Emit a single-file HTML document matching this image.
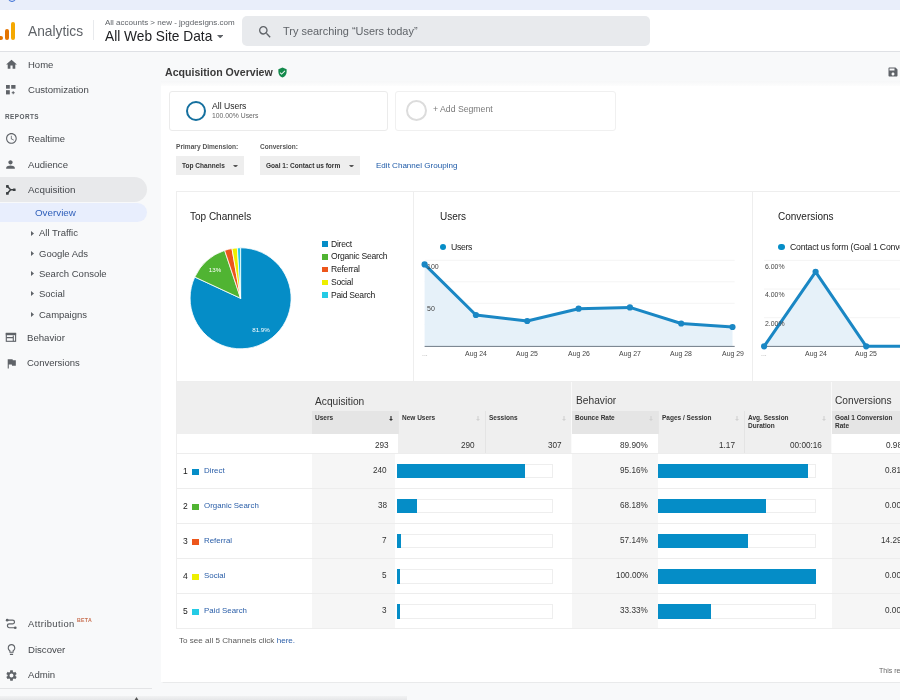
<!DOCTYPE html>
<html><head><meta charset="utf-8"><style>
html,body{margin:0;padding:0;}
body{width:900px;height:700px;overflow:hidden;position:relative;background:#f8f9fa;font-family:"Liberation Sans", sans-serif;}
.t{position:absolute;line-height:1;white-space:nowrap;will-change:transform;}
.r{position:absolute;}
</style></head><body>
<div class="r" style="left:0px;top:0px;width:900px;height:10px;background:#e9eefa;"></div>
<div class="r" style="left:0px;top:10px;width:900px;height:41px;background:#ffffff;"></div>
<div class="r" style="left:0px;top:51px;width:900px;height:1px;background:#dfe1e5;"></div>
<div class="r" style="left:0px;top:52px;width:900px;height:648px;background:#f8f9fa;"></div>
<div class="r" style="left:7.8px;top:-6.5px;width:8.4px;height:8.4px;border-radius:50%;border:1.6px solid #3b6fd4;box-sizing:border-box;background:#dfe7fb;"></div>
<div class="r" style="left:10.9px;top:22px;width:4.199999999999999px;height:18px;background:#f5a800;border-radius:2px;"></div>
<div class="r" style="left:4.9px;top:29.2px;width:4.199999999999999px;height:10.8px;background:#e37400;border-radius:2px;"></div>
<div class="r" style="left:-1.7px;top:35.8px;width:4.2px;height:4.200000000000003px;background:#e37400;border-radius:50%;"></div>
<div class="t" style="left:28.00px;top:25.00px;font-size:13.75px;color:#5f6368;font-weight:400;">Analytics</div>
<div class="r" style="left:93px;top:20px;width:1px;height:20px;background:#e8eaed;"></div>
<div class="t" style="left:104.70px;top:19.00px;font-size:8.0px;color:#5f6368;font-weight:400;">All accounts &gt; new - jpgdesigns.com</div>
<div class="t" style="left:104.70px;top:30.00px;font-size:13.72px;color:#202124;font-weight:400;">All Web Site Data</div>
<svg class="r" style="left:216.8px;top:34.8px;" width="6.4" height="3.4" viewBox="0 0 6.4 3.4"><path d="M0 0h6.4L3.2 3.4z" fill="#5f6368"/></svg>
<div class="r" style="left:242px;top:16px;width:408px;height:30px;background:#e8eaed;border-radius:5px;"></div>
<svg class="r" style="left:256.5px;top:23.5px;" width="16" height="16" viewBox="0 0 24 24"><path fill="#5f6368" d="M15.5 14h-.79l-.28-.27A6.471 6.471 0 0 0 16 9.5 6.5 6.5 0 1 0 9.5 16c1.61 0 3.09-.59 4.23-1.57l.27.28v.79l5 4.99L20.49 19l-4.99-5zm-6 0C7.01 14 5 11.99 5 9.5S7.01 5 9.5 5 14 7.01 14 9.5 11.99 14 9.5 14z"/></svg>
<div class="t" style="left:283.40px;top:26.00px;font-size:10.94px;color:#5f6368;font-weight:400;">Try searching “Users today”</div>
<div class="r" style="left:0px;top:176.8px;width:146.6px;height:25.69999999999999px;background:#e8e9eb;border-radius:0 13px 13px 0;"></div>
<div class="r" style="left:0px;top:202.5px;width:146.6px;height:19.5px;background:#e8eefd;border-radius:0 10px 10px 0;"></div>
<svg class="r" style="left:4.5px;top:57.5px;" width="13" height="13" viewBox="0 0 24 24"><path fill="#5f6368" d="M10 20v-6h4v6h5v-8h3L12 3 2 12h3v8z"/></svg>
<div class="t" style="left:27.80px;top:60.00px;font-size:9.5px;color:#45484c;font-weight:400;">Home</div>
<svg class="r" style="left:0px;top:80px;" width="25" height="20" viewBox="0 0 25 20"><g fill="#5f6368"><rect x="6" y="5" width="3.8" height="3.7"/><rect x="11.2" y="5" width="4.3" height="3.7"/><rect x="6" y="10.2" width="3.8" height="4.2"/><rect x="12.7" y="11.2" width="1" height="3"/><rect x="11.7" y="12.2" width="3" height="1"/></g></svg>
<div class="t" style="left:27.80px;top:85.00px;font-size:9.6px;color:#45484c;font-weight:400;">Customization</div>
<div class="t" style="left:4.70px;top:114.00px;font-size:6.4px;color:#5a5e62;font-weight:700;letter-spacing:0.45px;">REPORTS</div>
<svg class="r" style="left:4.8px;top:132.2px;" width="12.8" height="12.8" viewBox="0 0 24 24"><path fill="#5f6368" d="M11.99 2C6.47 2 2 6.48 2 12s4.47 10 9.99 10C17.52 22 22 17.52 22 12S17.52 2 11.99 2zM12 20c-4.42 0-8-3.58-8-8s3.58-8 8-8 8 3.58 8 8-3.58 8-8 8zm.5-13H11v6l5.25 3.15.75-1.23-4.5-2.67z"/></svg>
<div class="t" style="left:27.60px;top:134.00px;font-size:9.4px;color:#45484c;font-weight:400;">Realtime</div>
<svg class="r" style="left:4.2px;top:158px;" width="13" height="13" viewBox="0 0 24 24"><path fill="#5f6368" d="M12 12c2.21 0 4-1.79 4-4s-1.79-4-4-4-4 1.79-4 4 1.79 4 4 4zm0 2c-2.67 0-8 1.34-8 4v2h16v-2c0-2.66-5.33-4-8-4z"/></svg>
<div class="t" style="left:27.60px;top:160.00px;font-size:9.6px;color:#45484c;font-weight:400;">Audience</div>
<svg class="r" style="left:0px;top:178px;" width="25" height="20" viewBox="0 0 25 20"><g stroke="#3c4043" stroke-width="1.5" fill="none"><path d="M7.3 8.3L10.6 11.7L7.3 15.4M10.6 11.7H14.2"/></g><g fill="#3c4043"><rect x="6" y="7" width="2.7" height="2.7" rx="0.5"/><rect x="6" y="14.1" width="2.7" height="2.7" rx="0.5"/><rect x="12.9" y="10.4" width="2.7" height="2.7" rx="0.5"/></g></svg>
<div class="t" style="left:27.60px;top:185.00px;font-size:9.8px;color:#45484c;font-weight:400;">Acquisition</div>
<div class="t" style="left:35.20px;top:208.00px;font-size:9.8px;color:#2f5fba;font-weight:400;">Overview</div>
<svg class="r" style="left:31px;top:230.5px;" width="3" height="5" viewBox="0 0 3 5"><path d="M0 0L3 2.5L0 5z" fill="#5f6368"/></svg>
<div class="t" style="left:38.90px;top:228.00px;font-size:9.5px;color:#45484c;font-weight:400;">All Traffic</div>
<svg class="r" style="left:31px;top:250.8px;" width="3" height="5" viewBox="0 0 3 5"><path d="M0 0L3 2.5L0 5z" fill="#5f6368"/></svg>
<div class="t" style="left:38.90px;top:249.00px;font-size:9.5px;color:#45484c;font-weight:400;">Google Ads</div>
<svg class="r" style="left:31px;top:271.1px;" width="3" height="5" viewBox="0 0 3 5"><path d="M0 0L3 2.5L0 5z" fill="#5f6368"/></svg>
<div class="t" style="left:38.90px;top:269.00px;font-size:9.5px;color:#45484c;font-weight:400;">Search Console</div>
<svg class="r" style="left:31px;top:291.4px;" width="3" height="5" viewBox="0 0 3 5"><path d="M0 0L3 2.5L0 5z" fill="#5f6368"/></svg>
<div class="t" style="left:38.90px;top:289.00px;font-size:9.5px;color:#45484c;font-weight:400;">Social</div>
<svg class="r" style="left:31px;top:311.7px;" width="3" height="5" viewBox="0 0 3 5"><path d="M0 0L3 2.5L0 5z" fill="#5f6368"/></svg>
<div class="t" style="left:38.90px;top:310.00px;font-size:9.5px;color:#45484c;font-weight:400;">Campaigns</div>
<svg class="r" style="left:0px;top:325px;" width="25" height="25" viewBox="0 0 25 25"><g fill="none" stroke="#5f6368" stroke-width="1.1"><rect x="6.3" y="8.4" width="9.3" height="7.9"/><path d="M6.3 12.6H13.3M13.3 10.5V16.3"/></g><rect x="5.8" y="7.9" width="10.3" height="2.3" fill="#5f6368"/></svg>
<div class="t" style="left:27.40px;top:333.00px;font-size:9.6px;color:#45484c;font-weight:400;">Behavior</div>
<svg class="r" style="left:4.5px;top:357px;" width="13" height="13" viewBox="0 0 24 24"><path fill="#5f6368" d="M14.4 6L14 4H5v17h2v-7h5.6l.4 2h7V6z"/></svg>
<div class="t" style="left:27.40px;top:358.00px;font-size:9.5px;color:#45484c;font-weight:400;">Conversions</div>
<svg class="r" style="left:4.5px;top:617.5px;" width="13" height="13" viewBox="0 0 24 24"><g fill="none" stroke="#5f6368" stroke-width="2.2"><path d="M4 4h10a3.5 3.5 0 0 1 0 7H8a3.5 3.5 0 0 0 0 7h11"/></g><circle cx="4" cy="4" r="2.5" fill="#5f6368"/><circle cx="19" cy="18" r="2.5" fill="#5f6368"/></svg>
<div class="t" style="left:27.80px;top:619.00px;font-size:9.4px;color:#45484c;font-weight:400;letter-spacing:0.4px;">Attribution</div>
<div class="t" style="left:76.90px;top:618.00px;font-size:5.2px;color:#c86f4f;font-weight:700;letter-spacing:0.3px;">BETA</div>
<svg class="r" style="left:4.5px;top:643px;" width="13" height="13" viewBox="0 0 24 24"><path fill="#5f6368" d="M9 21c0 .55.45 1 1 1h4c.55 0 1-.45 1-1v-1H9v1zm3-19C8.14 2 5 5.14 5 9c0 2.38 1.19 4.470 3 5.74V17c0 .55.45 1 1 1h6c.55 0 1-.45 1-1v-2.26c1.81-1.27 3-3.36 3-5.740 0-3.86-3.14-7-7-7zm2.85 11.1l-.85.6V16h-4v-2.3l-.85-.6C7.8 12.16 7 10.63 7 9c0-2.76 2.24-5 5-5s5 2.24 5 5c0 1.63-.8 3.16-2.15 4.1z"/></svg>
<div class="t" style="left:27.80px;top:645.00px;font-size:9.6px;color:#45484c;font-weight:400;">Discover</div>
<svg class="r" style="left:4.5px;top:668.5px;" width="13" height="13" viewBox="0 0 24 24"><path fill="#5f6368" d="M19.14 12.94c.04-.3.06-.61.06-.94 0-.32-.02-.64-.07-.94l2.03-1.58c.18-.14.23-.41.12-.61l-1.92-3.32c-.12-.22-.37-.29-.59-.22l-2.39.96c-.5-.38-1.030-.7-1.62-.94l-.36-2.54c-.04-.24-.24-.41-.48-.41h-3.84c-.24 0-.43.17-.47.41l-.36 2.54c-.59.24-1.13.57-1.62.94l-2.39-.96c-.22-.08-.47 0-.59.22L2.74 8.87c-.12.21-.08.47.12.61l2.03 1.58c-.05.3-.09.63-.09.94s.02.64.07.94l-2.03 1.58c-.18.14-.23.41-.12.61l1.92 3.32c.12.22.37.29.59.22l2.39-.96c.5.38 1.03.7 1.62.94l.36 2.54c.05.24.24.41.48.41h3.84c.24 0 .44-.17.47-.41l.36-2.54c.59-.24 1.13-.56 1.62-.94l2.39.96c.22.08.47 0 .59-.22l1.92-3.32c.12-.22.07-.47-.12-.61l-2.01-1.58zM12 15.6c-1.98 0-3.6-1.62-3.6-3.6s1.62-3.6 3.6-3.6 3.6 1.62 3.6 3.6-1.62 3.6-3.6 3.6z"/></svg>
<div class="t" style="left:27.80px;top:670.00px;font-size:9.6px;color:#45484c;font-weight:400;">Admin</div>
<div class="r" style="left:0px;top:688px;width:152px;height:1px;background:#e3e4e6;"></div>
<div class="r" style="left:0px;top:695.5px;width:407px;height:4.5px;background:linear-gradient(#f1f2f3,#e6e7e9);"></div>
<svg class="r" style="left:133.8px;top:696.5px;" width="5" height="4" viewBox="0 0 5 4"><path d="M0 4L2.5 0L5 4z" fill="#555"/></svg>
<div class="t" style="left:165.40px;top:67.00px;font-size:10.6px;color:#3a3a3a;font-weight:700;">Acquisition Overview</div>
<svg class="r" style="left:277.3px;top:66.5px;" width="11" height="11" viewBox="0 0 24 24"><path fill="#148a4c" d="M12 1L3 5v6c0 5.55 3.84 10.74 9 12 5.160-1.26 9-6.45 9-12V5l-9-4zm-2 16l-4-4 1.41-1.41L10 14.17l6.59-6.59L18 9l-8 8z"/></svg>
<svg class="r" style="left:886.5px;top:66px;" width="12" height="12" viewBox="0 0 24 24"><path fill="#5f6368" d="M17 3H5c-1.11 0-2 .9-2 2v14c0 1.1.89 2 2 2h14c1.1 0 2-.9 2-2V7l-4-4zm-5 16c-1.66 0-3-1.34-3-3s1.34-3 3-3 3 1.34 3 3-1.34 3-3 3zm3-10H5V5h10v4z"/></svg>
<div class="r" style="left:160.5px;top:81px;width:749.5px;height:5px;background:linear-gradient(#f6f7f8,#fdfdfd);"></div>
<div class="r" style="left:160.5px;top:85.5px;width:749.5px;height:596.1px;background:#ffffff;box-shadow:-0.5px 0.5px 1px rgba(0,0,0,0.06);"></div>
<div class="r" style="left:169px;top:90.5px;width:219px;height:40.5px;background:#fff;border:1px solid #ebebeb;border-radius:3px;box-sizing:border-box;"></div>
<div class="r" style="left:185.9px;top:100.5px;width:20.6px;height:20.6px;border:2.5px solid #15709f;border-radius:50%;box-sizing:border-box;"></div>
<div class="t" style="left:212.20px;top:102.00px;font-size:8.6px;color:#222;font-weight:400;">All Users</div>
<div class="t" style="left:212.20px;top:113.00px;font-size:6.8px;color:#666;font-weight:400;">100.00% Users</div>
<div class="r" style="left:395.4px;top:91px;width:220.30000000000007px;height:39.599999999999994px;background:#fff;border:1px solid #f0f0f0;border-radius:3px;box-sizing:border-box;"></div>
<div class="r" style="left:406px;top:100px;width:21px;height:21px;border:2px solid #dcdcdc;border-radius:50%;box-sizing:border-box;"></div>
<div class="t" style="left:433.00px;top:105.00px;font-size:8.7px;color:#7a7a7a;font-weight:400;">+ Add Segment</div>
<div class="t" style="left:176.00px;top:144.00px;font-size:6.6px;color:#555;font-weight:700;">Primary Dimension:</div>
<div class="t" style="left:259.70px;top:144.00px;font-size:6.5px;color:#555;font-weight:700;">Conversion:</div>
<div class="r" style="left:176px;top:156.4px;width:67.5px;height:18.19999999999999px;background:#eeeeee;"></div>
<div class="t" style="left:181.50px;top:163.00px;font-size:6.55px;color:#333;font-weight:700;">Top Channels</div>
<svg class="r" style="left:233.3px;top:164.6px;" width="5" height="2.8" viewBox="0 0 5 2.8"><path d="M0 0h5L2.5 2.8z" fill="#555"/></svg>
<div class="r" style="left:259.7px;top:156.4px;width:99.90000000000003px;height:18.19999999999999px;background:#eeeeee;"></div>
<div class="t" style="left:265.60px;top:163.00px;font-size:6.56px;color:#333;font-weight:700;">Goal 1: Contact us form</div>
<svg class="r" style="left:348.8px;top:164.6px;" width="5" height="2.8" viewBox="0 0 5 2.8"><path d="M0 0h5L2.5 2.8z" fill="#555"/></svg>
<div class="t" style="left:375.80px;top:162.00px;font-size:8.05px;color:#1f5ba8;font-weight:400;">Edit Channel Grouping</div>
<div class="r" style="left:176px;top:191px;width:734px;height:191px;background:#fff;border:1px solid #eeeeee;box-sizing:border-box;"></div>
<div class="r" style="left:413px;top:191px;width:1px;height:191px;background:#eeeeee;"></div>
<div class="r" style="left:752px;top:191px;width:1px;height:191px;background:#eeeeee;"></div>
<svg class="r" style="left:0;top:0" width="900" height="700" viewBox="0 0 900 700"><path d="M240.6,298.3 L240.60,247.80 A50.5,50.5 0 1 1 194.79,277.05 Z" fill="#058dc7" stroke="#fff" stroke-width="0.8"/><path d="M240.6,298.3 L194.79,277.05 A50.5,50.5 0 0 1 224.63,250.39 Z" fill="#50b432" stroke="#fff" stroke-width="0.8"/><path d="M240.6,298.3 L224.63,250.39 A50.5,50.5 0 0 1 231.98,248.54 Z" fill="#ed561b" stroke="#fff" stroke-width="0.8"/><path d="M240.6,298.3 L231.98,248.54 A50.5,50.5 0 0 1 237.35,247.90 Z" fill="#edef00" stroke="#fff" stroke-width="0.8"/><path d="M240.6,298.3 L237.35,247.90 A50.5,50.5 0 0 1 240.60,247.80 Z" fill="#24cbe5" stroke="#fff" stroke-width="0.8"/></svg>
<div class="t" style="left:161.30px;width:200px;text-align:center;top:327.00px;font-size:6.2px;color:#fff;font-weight:400;">81.9%</div>
<div class="t" style="left:115.00px;width:200px;text-align:center;top:267.00px;font-size:6.2px;color:#fff;font-weight:400;">13%</div>
<div class="t" style="left:190.20px;top:212.00px;font-size:10.0px;color:#222;font-weight:400;">Top Channels</div>
<div class="r" style="left:321.7px;top:241.2px;width:6.199999999999989px;height:5.700000000000017px;background:#058dc7;"></div>
<div class="t" style="left:331.40px;top:240.00px;font-size:8.6px;color:#1a1a1a;font-weight:400;letter-spacing:-0.25px;">Direct</div>
<div class="r" style="left:321.7px;top:253.98px;width:6.199999999999989px;height:5.700000000000017px;background:#50b432;"></div>
<div class="t" style="left:331.40px;top:252.00px;font-size:8.6px;color:#1a1a1a;font-weight:400;letter-spacing:-0.25px;">Organic Search</div>
<div class="r" style="left:321.7px;top:266.76px;width:6.199999999999989px;height:5.699999999999989px;background:#ed561b;"></div>
<div class="t" style="left:331.40px;top:265.00px;font-size:8.6px;color:#1a1a1a;font-weight:400;letter-spacing:-0.25px;">Referral</div>
<div class="r" style="left:321.7px;top:279.54px;width:6.199999999999989px;height:5.699999999999989px;background:#edef00;"></div>
<div class="t" style="left:331.40px;top:278.00px;font-size:8.6px;color:#1a1a1a;font-weight:400;letter-spacing:-0.25px;">Social</div>
<div class="r" style="left:321.7px;top:292.32px;width:6.199999999999989px;height:5.699999999999989px;background:#24cbe5;"></div>
<div class="t" style="left:331.40px;top:291.00px;font-size:8.6px;color:#1a1a1a;font-weight:400;letter-spacing:-0.25px;">Paid Search</div>
<div class="t" style="left:439.70px;top:212.00px;font-size:10.0px;color:#222;font-weight:400;">Users</div>
<div class="r" style="left:439.5px;top:243.7px;width:6.4px;height:6.4px;border-radius:50%;background:#058dc7;"></div>
<div class="t" style="left:451.30px;top:243.00px;font-size:8.7px;color:#222;font-weight:400;letter-spacing:-0.35px;">Users</div>
<svg class="r" style="left:0;top:0" width="900" height="700" viewBox="0 0 900 700"><line x1="424.6" y1="260.3" x2="734.7" y2="260.3" stroke="#f4f4f4" stroke-width="1"/><line x1="424.6" y1="281.8" x2="734.7" y2="281.8" stroke="#f4f4f4" stroke-width="1"/><line x1="424.6" y1="303.3" x2="734.7" y2="303.3" stroke="#f4f4f4" stroke-width="1"/><line x1="424.6" y1="324.8" x2="734.7" y2="324.8" stroke="#f4f4f4" stroke-width="1"/><polygon points="424.6,346.3 424.6,264.4 475.9,315.0 527.2,321.0 578.6,308.7 629.9,307.4 681.2,323.5 732.5,327.0 732.5,346.3" fill="#e6f1f9"/><line x1="424.6" y1="346.4" x2="734.7" y2="346.4" stroke="#6f7b88" stroke-width="1"/><polyline points="424.6,264.4 475.9,315.0 527.2,321.0 578.6,308.7 629.9,307.4 681.2,323.5 732.5,327.0" fill="none" stroke="#1a87c4" stroke-width="3" stroke-linejoin="round"/><circle cx="424.6" cy="264.4" r="3.1" fill="#1a87c4"/><circle cx="475.9" cy="315.0" r="3.1" fill="#1a87c4"/><circle cx="527.2" cy="321.0" r="3.1" fill="#1a87c4"/><circle cx="578.6" cy="308.7" r="3.1" fill="#1a87c4"/><circle cx="629.9" cy="307.4" r="3.1" fill="#1a87c4"/><circle cx="681.2" cy="323.5" r="3.1" fill="#1a87c4"/><circle cx="732.5" cy="327.0" r="3.1" fill="#1a87c4"/></svg>
<div class="t" style="left:426.70px;top:263.00px;font-size:7.0px;color:#444;font-weight:400;">100</div>
<div class="t" style="left:426.60px;top:305.00px;font-size:7.0px;color:#444;font-weight:400;">50</div>
<div class="t" style="left:375.92px;width:200px;text-align:center;top:351.00px;font-size:6.9px;color:#444;font-weight:400;">Aug 24</div>
<div class="t" style="left:427.24px;width:200px;text-align:center;top:351.00px;font-size:6.9px;color:#444;font-weight:400;">Aug 25</div>
<div class="t" style="left:478.56px;width:200px;text-align:center;top:351.00px;font-size:6.9px;color:#444;font-weight:400;">Aug 26</div>
<div class="t" style="left:529.88px;width:200px;text-align:center;top:351.00px;font-size:6.9px;color:#444;font-weight:400;">Aug 27</div>
<div class="t" style="left:581.20px;width:200px;text-align:center;top:351.00px;font-size:6.9px;color:#444;font-weight:400;">Aug 28</div>
<div class="t" style="left:632.52px;width:200px;text-align:center;top:351.00px;font-size:6.9px;color:#444;font-weight:400;">Aug 29</div>
<div class="t" style="left:422.00px;top:351.00px;font-size:6.9px;color:#aaa;font-weight:400;">...</div>
<div class="t" style="left:778.30px;top:212.00px;font-size:10.0px;color:#222;font-weight:400;">Conversions</div>
<div class="r" style="left:778.3px;top:243.5px;width:6.4px;height:6.4px;border-radius:50%;background:#058dc7;"></div>
<div class="t" style="left:789.90px;top:243.00px;font-size:8.7px;color:#222;font-weight:400;letter-spacing:-0.2px;">Contact us form (Goal 1 Conversion Rate)</div>
<svg class="r" style="left:0;top:0" width="900" height="700" viewBox="0 0 900 700"><line x1="764" y1="260.4" x2="900" y2="260.4" stroke="#f4f4f4" stroke-width="1"/><line x1="764" y1="289.0" x2="900" y2="289.0" stroke="#f4f4f4" stroke-width="1"/><line x1="764" y1="317.7" x2="900" y2="317.7" stroke="#f4f4f4" stroke-width="1"/><polygon points="764.1,346.3 815.6,271.8 866.2,346.3 917.5,346.3 969.0,346.3" fill="#e6f1f9"/><line x1="764" y1="346.4" x2="900" y2="346.4" stroke="#6f7b88" stroke-width="1"/><polyline points="764.1,346.3 815.6,271.8 866.2,346.3 917.5,346.3 969.0,346.3" fill="none" stroke="#1a87c4" stroke-width="3" stroke-linejoin="round"/><circle cx="764.1" cy="346.3" r="3.1" fill="#1a87c4"/><circle cx="815.6" cy="271.8" r="3.1" fill="#1a87c4"/><circle cx="866.2" cy="346.3" r="3.1" fill="#1a87c4"/><circle cx="917.5" cy="346.3" r="3.1" fill="#1a87c4"/><circle cx="969.0" cy="346.3" r="3.1" fill="#1a87c4"/></svg>
<div class="t" style="left:765.40px;top:264.00px;font-size:6.9px;color:#444;font-weight:400;">6.00%</div>
<div class="t" style="left:765.40px;top:292.00px;font-size:6.9px;color:#444;font-weight:400;">4.00%</div>
<div class="t" style="left:765.40px;top:321.00px;font-size:6.9px;color:#444;font-weight:400;">2.00%</div>
<div class="t" style="left:715.60px;width:200px;text-align:center;top:351.00px;font-size:6.9px;color:#444;font-weight:400;">Aug 24</div>
<div class="t" style="left:766.20px;width:200px;text-align:center;top:351.00px;font-size:6.9px;color:#444;font-weight:400;">Aug 25</div>
<div class="t" style="left:761.00px;top:351.00px;font-size:6.9px;color:#aaa;font-weight:400;">...</div>
<div class="r" style="left:176px;top:381.7px;width:734px;height:52.0px;background:#efefef;"></div>
<div class="r" style="left:570.7px;top:381.7px;width:1.0px;height:246.7px;background:#fafafa;"></div>
<div class="r" style="left:830.7px;top:381.7px;width:1.0px;height:246.7px;background:#fafafa;"></div>
<div class="t" style="left:315.00px;top:397.00px;font-size:10.2px;color:#333;font-weight:400;">Acquisition</div>
<div class="t" style="left:575.60px;top:396.00px;font-size:10.2px;color:#333;font-weight:400;">Behavior</div>
<div class="t" style="left:835.10px;top:396.00px;font-size:10.2px;color:#333;font-weight:400;">Conversions</div>
<div class="r" style="left:311.7px;top:411px;width:86.60000000000002px;height:22.69999999999999px;background:#e5e5e5;"></div>
<div class="t" style="left:315.20px;top:415.00px;font-size:6.5px;color:#333;font-weight:700;white-space:nowrap;">Users</div>
<svg class="r" style="left:389.3px;top:416.3px;" width="4" height="5" viewBox="0 0 4 5"><path d="M1.4 0h1.2v3H4L2 5 0 3h1.4z" fill="#333"/></svg>
<div class="r" style="left:398.3px;top:411px;width:87.0px;height:22.69999999999999px;background:#efefef;"></div>
<div class="t" style="left:401.80px;top:415.00px;font-size:6.5px;color:#333;font-weight:700;white-space:nowrap;">New Users</div>
<svg class="r" style="left:476.3px;top:416.3px;" width="4" height="5" viewBox="0 0 4 5"><path d="M1.4 0h1.2v3H4L2 5 0 3h1.4z" fill="#d2d2d2"/></svg>
<div class="r" style="left:485.3px;top:411px;width:85.40000000000003px;height:22.69999999999999px;background:#efefef;"></div>
<div class="t" style="left:488.80px;top:415.00px;font-size:6.5px;color:#333;font-weight:700;white-space:nowrap;">Sessions</div>
<svg class="r" style="left:561.7px;top:416.3px;" width="4" height="5" viewBox="0 0 4 5"><path d="M1.4 0h1.2v3H4L2 5 0 3h1.4z" fill="#d2d2d2"/></svg>
<div class="r" style="left:571.7px;top:411px;width:86.5px;height:22.69999999999999px;background:#e5e5e5;"></div>
<div class="t" style="left:575.20px;top:415.00px;font-size:6.5px;color:#333;font-weight:700;white-space:nowrap;">Bounce Rate</div>
<svg class="r" style="left:649.2px;top:416.3px;" width="4" height="5" viewBox="0 0 4 5"><path d="M1.4 0h1.2v3H4L2 5 0 3h1.4z" fill="#d2d2d2"/></svg>
<div class="r" style="left:658.2px;top:411px;width:86.19999999999993px;height:22.69999999999999px;background:#efefef;"></div>
<div class="t" style="left:661.70px;top:415.00px;font-size:6.5px;color:#333;font-weight:700;white-space:nowrap;">Pages / Session</div>
<svg class="r" style="left:735.4px;top:416.3px;" width="4" height="5" viewBox="0 0 4 5"><path d="M1.4 0h1.2v3H4L2 5 0 3h1.4z" fill="#d2d2d2"/></svg>
<div class="r" style="left:744.4px;top:411px;width:86.30000000000007px;height:22.69999999999999px;background:#efefef;"></div>
<div class="t" style="left:747.90px;top:415.00px;font-size:6.5px;color:#333;font-weight:700;white-space:nowrap;">Avg. Session</div>
<div class="t" style="left:747.90px;top:423.00px;font-size:6.5px;color:#333;font-weight:700;white-space:nowrap;">Duration</div>
<svg class="r" style="left:821.7px;top:416.3px;" width="4" height="5" viewBox="0 0 4 5"><path d="M1.4 0h1.2v3H4L2 5 0 3h1.4z" fill="#d2d2d2"/></svg>
<div class="r" style="left:831.7px;top:411px;width:78.29999999999995px;height:22.69999999999999px;background:#e5e5e5;"></div>
<div class="t" style="left:835.20px;top:415.00px;font-size:6.5px;color:#333;font-weight:700;white-space:nowrap;">Goal 1 Conversion</div>
<div class="t" style="left:835.20px;top:423.00px;font-size:6.5px;color:#333;font-weight:700;white-space:nowrap;">Rate</div>
<div class="r" style="left:398.3px;top:411px;width:0.8000000000000114px;height:42px;background:#e6e6e6;"></div>
<div class="r" style="left:485.3px;top:411px;width:0.8000000000000114px;height:42px;background:#e6e6e6;"></div>
<div class="r" style="left:658.2px;top:411px;width:0.7999999999999545px;height:42px;background:#e6e6e6;"></div>
<div class="r" style="left:744.4px;top:411px;width:0.7999999999999545px;height:42px;background:#e6e6e6;"></div>
<div class="r" style="left:176px;top:433.7px;width:135.7px;height:19.30000000000001px;background:#fff;"></div>
<div class="r" style="left:311.7px;top:433.7px;width:86.60000000000002px;height:19.30000000000001px;background:#fff;"></div>
<div class="r" style="left:398.3px;top:433.7px;width:172.40000000000003px;height:19.30000000000001px;background:#efefef;"></div>
<div class="r" style="left:571.7px;top:433.7px;width:86.5px;height:19.30000000000001px;background:#fff;"></div>
<div class="r" style="left:658.2px;top:433.7px;width:172.5px;height:19.30000000000001px;background:#efefef;"></div>
<div class="r" style="left:831.7px;top:433.7px;width:78.29999999999995px;height:19.30000000000001px;background:#fff;"></div>
<div class="r" style="left:485.3px;top:411px;width:0.8000000000000114px;height:42px;background:#e4e4e4;"></div>
<div class="r" style="left:744.4px;top:411px;width:0.7999999999999545px;height:42px;background:#e4e4e4;"></div>
<div class="t" style="right:511.70px;top:442.00px;font-size:8.2px;color:#333;font-weight:400;">293</div>
<div class="t" style="right:425.00px;top:442.00px;font-size:8.2px;color:#333;font-weight:400;">290</div>
<div class="t" style="right:338.30px;top:442.00px;font-size:8.2px;color:#333;font-weight:400;">307</div>
<div class="t" style="right:252.20px;top:442.00px;font-size:8.2px;color:#333;font-weight:400;">89.90%</div>
<div class="t" style="right:164.90px;top:442.00px;font-size:8.2px;color:#333;font-weight:400;">1.17</div>
<div class="t" style="right:78.60px;top:442.00px;font-size:8.2px;color:#333;font-weight:400;">00:00:16</div>
<div class="t" style="left:886.30px;top:442.00px;font-size:8.2px;color:#333;font-weight:400;">0.98%</div>
<div class="r" style="left:176px;top:453px;width:734px;height:175.39999999999998px;background:#fff;"></div>
<div class="r" style="left:311.7px;top:453.0px;width:83.80000000000001px;height:35.079999999999984px;background:#f6f6f6;"></div>
<div class="r" style="left:571.7px;top:453.0px;width:86.5px;height:35.079999999999984px;background:#f6f6f6;"></div>
<div class="r" style="left:831.7px;top:453.0px;width:78.29999999999995px;height:35.079999999999984px;background:#f6f6f6;"></div>
<div class="r" style="left:176px;top:452.5px;width:734px;height:1.0px;background:#ededed;"></div>
<div class="t" style="left:183.30px;top:467.00px;font-size:8.5px;color:#1a1a1a;font-weight:400;">1</div>
<div class="r" style="left:192px;top:469.0px;width:7px;height:5.5px;background:#058dc7;"></div>
<div class="t" style="left:203.70px;top:467.00px;font-size:7.9px;color:#2a5ea8;font-weight:400;">Direct</div>
<div class="t" style="right:513.30px;top:467.00px;font-size:8.2px;color:#333;font-weight:400;">240</div>
<div class="r" style="left:397px;top:464.0px;width:156.29999999999995px;height:14.300000000000011px;background:#fff;border:1px solid #eeeeee;box-sizing:border-box;"></div>
<div class="r" style="left:397px;top:464.0px;width:128.00970000000007px;height:14.300000000000011px;background:#058dc7;"></div>
<div class="t" style="right:252.00px;top:467.00px;font-size:8.2px;color:#333;font-weight:400;">95.16%</div>
<div class="r" style="left:658.2px;top:464.0px;width:157.5999999999999px;height:14.300000000000011px;background:#fff;border:1px solid #eeeeee;box-sizing:border-box;"></div>
<div class="r" style="left:658.2px;top:464.0px;width:149.97216000000003px;height:14.300000000000011px;background:#058dc7;"></div>
<div class="t" style="left:885.00px;top:467.00px;font-size:8.2px;color:#333;font-weight:400;">0.81%</div>
<div class="r" style="left:311.7px;top:488.08px;width:83.80000000000001px;height:35.079999999999984px;background:#f6f6f6;"></div>
<div class="r" style="left:571.7px;top:488.08px;width:86.5px;height:35.079999999999984px;background:#f6f6f6;"></div>
<div class="r" style="left:831.7px;top:488.08px;width:78.29999999999995px;height:35.079999999999984px;background:#f6f6f6;"></div>
<div class="r" style="left:176px;top:487.58px;width:734px;height:1.0px;background:#ededed;"></div>
<div class="t" style="left:183.30px;top:502.00px;font-size:8.5px;color:#1a1a1a;font-weight:400;">2</div>
<div class="r" style="left:192px;top:504.08px;width:7px;height:5.5px;background:#50b432;"></div>
<div class="t" style="left:203.70px;top:502.00px;font-size:7.9px;color:#2a5ea8;font-weight:400;">Organic Search</div>
<div class="t" style="right:513.30px;top:502.00px;font-size:8.2px;color:#333;font-weight:400;">38</div>
<div class="r" style="left:397px;top:499.08px;width:156.29999999999995px;height:14.300000000000011px;background:#fff;border:1px solid #eeeeee;box-sizing:border-box;"></div>
<div class="r" style="left:397px;top:499.08px;width:20.319000000000017px;height:14.300000000000011px;background:#058dc7;"></div>
<div class="t" style="right:252.00px;top:502.00px;font-size:8.2px;color:#333;font-weight:400;">68.18%</div>
<div class="r" style="left:658.2px;top:499.08px;width:157.5999999999999px;height:14.300000000000011px;background:#fff;border:1px solid #eeeeee;box-sizing:border-box;"></div>
<div class="r" style="left:658.2px;top:499.08px;width:107.45168000000001px;height:14.300000000000011px;background:#058dc7;"></div>
<div class="t" style="left:885.00px;top:502.00px;font-size:8.2px;color:#333;font-weight:400;">0.00%</div>
<div class="r" style="left:311.7px;top:523.16px;width:83.80000000000001px;height:35.08000000000004px;background:#f6f6f6;"></div>
<div class="r" style="left:571.7px;top:523.16px;width:86.5px;height:35.08000000000004px;background:#f6f6f6;"></div>
<div class="r" style="left:831.7px;top:523.16px;width:78.29999999999995px;height:35.08000000000004px;background:#f6f6f6;"></div>
<div class="r" style="left:176px;top:522.66px;width:734px;height:1.0px;background:#ededed;"></div>
<div class="t" style="left:183.30px;top:537.00px;font-size:8.5px;color:#1a1a1a;font-weight:400;">3</div>
<div class="r" style="left:192px;top:539.16px;width:7px;height:5.5px;background:#ed561b;"></div>
<div class="t" style="left:203.70px;top:537.00px;font-size:7.9px;color:#2a5ea8;font-weight:400;">Referral</div>
<div class="t" style="right:513.30px;top:537.00px;font-size:8.2px;color:#333;font-weight:400;">7</div>
<div class="r" style="left:397px;top:534.16px;width:156.29999999999995px;height:14.299999999999955px;background:#fff;border:1px solid #eeeeee;box-sizing:border-box;"></div>
<div class="r" style="left:397px;top:534.16px;width:3.751199999999983px;height:14.299999999999955px;background:#058dc7;"></div>
<div class="t" style="right:252.00px;top:537.00px;font-size:8.2px;color:#333;font-weight:400;">57.14%</div>
<div class="r" style="left:658.2px;top:534.16px;width:157.5999999999999px;height:14.299999999999955px;background:#fff;border:1px solid #eeeeee;box-sizing:border-box;"></div>
<div class="r" style="left:658.2px;top:534.16px;width:90.05264px;height:14.299999999999955px;background:#058dc7;"></div>
<div class="t" style="left:880.60px;top:537.00px;font-size:8.2px;color:#333;font-weight:400;">14.29%</div>
<div class="r" style="left:311.7px;top:558.24px;width:83.80000000000001px;height:35.08000000000004px;background:#f6f6f6;"></div>
<div class="r" style="left:571.7px;top:558.24px;width:86.5px;height:35.08000000000004px;background:#f6f6f6;"></div>
<div class="r" style="left:831.7px;top:558.24px;width:78.29999999999995px;height:35.08000000000004px;background:#f6f6f6;"></div>
<div class="r" style="left:176px;top:557.74px;width:734px;height:1.0px;background:#ededed;"></div>
<div class="t" style="left:183.30px;top:572.00px;font-size:8.5px;color:#1a1a1a;font-weight:400;">4</div>
<div class="r" style="left:192px;top:574.24px;width:7px;height:5.5px;background:#edef00;"></div>
<div class="t" style="left:203.70px;top:572.00px;font-size:7.9px;color:#2a5ea8;font-weight:400;">Social</div>
<div class="t" style="right:513.30px;top:572.00px;font-size:8.2px;color:#333;font-weight:400;">5</div>
<div class="r" style="left:397px;top:569.24px;width:156.29999999999995px;height:14.299999999999955px;background:#fff;border:1px solid #eeeeee;box-sizing:border-box;"></div>
<div class="r" style="left:397px;top:569.24px;width:3px;height:14.299999999999955px;background:#058dc7;"></div>
<div class="t" style="right:252.00px;top:572.00px;font-size:8.2px;color:#333;font-weight:400;">100.00%</div>
<div class="r" style="left:658.2px;top:569.24px;width:157.5999999999999px;height:14.299999999999955px;background:#fff;border:1px solid #eeeeee;box-sizing:border-box;"></div>
<div class="r" style="left:658.2px;top:569.24px;width:157.60000000000002px;height:14.299999999999955px;background:#058dc7;"></div>
<div class="t" style="left:885.00px;top:572.00px;font-size:8.2px;color:#333;font-weight:400;">0.00%</div>
<div class="r" style="left:311.7px;top:593.3199999999999px;width:83.80000000000001px;height:35.08000000000004px;background:#f6f6f6;"></div>
<div class="r" style="left:571.7px;top:593.3199999999999px;width:86.5px;height:35.08000000000004px;background:#f6f6f6;"></div>
<div class="r" style="left:831.7px;top:593.3199999999999px;width:78.29999999999995px;height:35.08000000000004px;background:#f6f6f6;"></div>
<div class="r" style="left:176px;top:592.8199999999999px;width:734px;height:1.0px;background:#ededed;"></div>
<div class="t" style="left:183.30px;top:607.00px;font-size:8.5px;color:#1a1a1a;font-weight:400;">5</div>
<div class="r" style="left:192px;top:609.3199999999999px;width:7px;height:5.5px;background:#24cbe5;"></div>
<div class="t" style="left:203.70px;top:607.00px;font-size:7.9px;color:#2a5ea8;font-weight:400;">Paid Search</div>
<div class="t" style="right:513.30px;top:607.00px;font-size:8.2px;color:#333;font-weight:400;">3</div>
<div class="r" style="left:397px;top:604.3199999999999px;width:156.29999999999995px;height:14.299999999999955px;background:#fff;border:1px solid #eeeeee;box-sizing:border-box;"></div>
<div class="r" style="left:397px;top:604.3199999999999px;width:3px;height:14.299999999999955px;background:#058dc7;"></div>
<div class="t" style="right:252.00px;top:607.00px;font-size:8.2px;color:#333;font-weight:400;">33.33%</div>
<div class="r" style="left:658.2px;top:604.3199999999999px;width:157.5999999999999px;height:14.299999999999955px;background:#fff;border:1px solid #eeeeee;box-sizing:border-box;"></div>
<div class="r" style="left:658.2px;top:604.3199999999999px;width:52.528080000000045px;height:14.299999999999955px;background:#058dc7;"></div>
<div class="t" style="left:885.00px;top:607.00px;font-size:8.2px;color:#333;font-weight:400;">0.00%</div>
<div class="r" style="left:176px;top:381.7px;width:1px;height:246.7px;background:#eeeeee;"></div>
<div class="r" style="left:176px;top:628px;width:734px;height:1px;background:#eeeeee;"></div>
<div class="t" style="left:179.20px;top:637.00px;font-size:8.1px;color:#5a5a5a;font-weight:400;">To see all 5 Channels click <span style="color:#2a5ea8">here.</span></div>
<div class="t" style="left:878.50px;top:667.00px;font-size:7.0px;color:#666;font-weight:400;white-space:nowrap;">This report was generated</div>
</body></html>
